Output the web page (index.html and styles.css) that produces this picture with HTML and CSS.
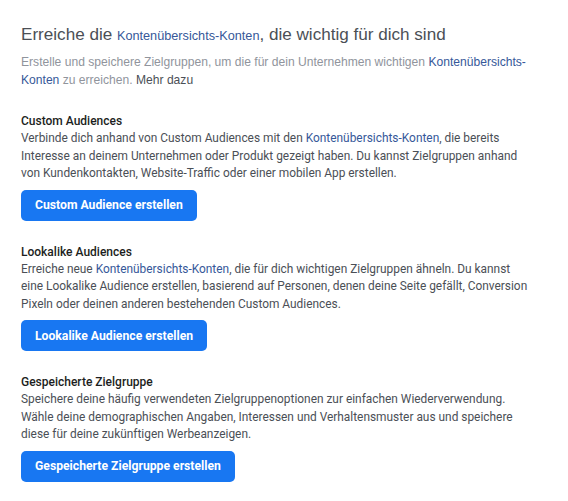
FILE: index.html
```html
<!DOCTYPE html>
<html lang="de">
<head>
    <meta charset="UTF-8">
    <meta name="viewport" content="width=device-width, initial-scale=1.0">
    <title>Zielgruppen</title>

    <link rel="stylesheet" href="styles.css">
</head>
<body>
    <div class="panel">
        <!-- Kopfbereich -->
        <h1 class="titel">Erreiche die <a href="#" class="titel-link">Kontenübersichts-Konten</a>, die wichtig für dich sind</h1>
        <p class="intro">Erstelle und speichere Zielgruppen, um die für dein Unternehmen wichtigen <a href="#">Kontenübersichts-Konten</a> zu erreichen. <a href="#" class="mehr">Mehr dazu</a></p>

        <!-- Custom Audiences -->
        <div class="zielgruppe">
            <h2>Custom Audiences</h2>
            <p>Verbinde dich anhand von Custom Audiences mit den <a href="#">Kontenübersichts-Konten</a>, die bereits Interesse an deinem Unternehmen oder Produkt gezeigt haben. Du kannst Zielgruppen anhand von Kundenkontakten, Website-Traffic oder einer mobilen App erstellen.</p>
            <button>Custom Audience erstellen</button>
        </div>

        <!-- Lookalike Audiences -->
        <div class="zielgruppe">
            <h2>Lookalike Audiences</h2>
            <p>Erreiche neue <a href="#">Kontenübersichts-Konten</a>, die für dich wichtigen Zielgruppen ähneln. Du kannst eine Lookalike Audience erstellen, basierend auf Personen, denen deine Seite gefällt, Conversion Pixeln oder deinen anderen bestehenden Custom Audiences.</p>
            <button>Lookalike Audience erstellen</button>
        </div>

        <!-- Gespeicherte Zielgruppe -->
        <div class="zielgruppe">
            <h2>Gespeicherte Zielgruppe</h2>
            <p>Speichere deine häufig verwendeten Zielgruppenoptionen zur einfachen Wiederverwendung. Wähle deine demographischen Angaben, Interessen und Verhaltensmuster aus und speichere diese für deine zukünftigen Werbeanzeigen.</p>
            <button>Gespeicherte Zielgruppe erstellen</button>
        </div>
    </div>
</body>
</html>
```

FILE: styles.css
```css
body {
    font-family: Roboto, "Liberation Sans", sans-serif;
    background-color: #fff;
    margin: 0;
    padding: 24px 21px 0 21px;
}

a {
    color: #365899;
    text-decoration: none;
}

.titel {
    font-family: "Liberation Sans", Arial, sans-serif;
    font-size: 17.1px;
    font-weight: normal;
    color: #4b4f56;
    margin: 0 0 6px 0;
    line-height: 22px;
}
.titel-link {font-size: 12.7px;}

.intro {
    font-family: "Liberation Sans", Arial, sans-serif;
    font-size: 12.1px;
    line-height: 18px;
    color: #90949c;
    margin: 0 0 23px 0;
    padding-right: 18px;
}
.intro .mehr {color: #4b4f56;}

.zielgruppe {
    margin-bottom: 22px;
}

.zielgruppe h2 {
    font-size: 12px;
    font-weight: 500;
    color: #1c1e21;
    margin: 0;
    line-height: 18px;
}

.zielgruppe p {
    font-size: 11.9px;
    line-height: 17.5px;
    color: #4b4f56;
    margin: 0 0 7px 0;
    padding-right: 15px;
}

button {
    font-family: Roboto, sans-serif;
    font-size: 12.2px;
    font-weight: bold;
    height: 31px;
    padding: 0 14px;
    background-color: #1877f2;
    color: white;
    border: none;
    border-radius: 5px;
    cursor: pointer;
}

button:hover {
    background-color: #166fe5;
}
```
